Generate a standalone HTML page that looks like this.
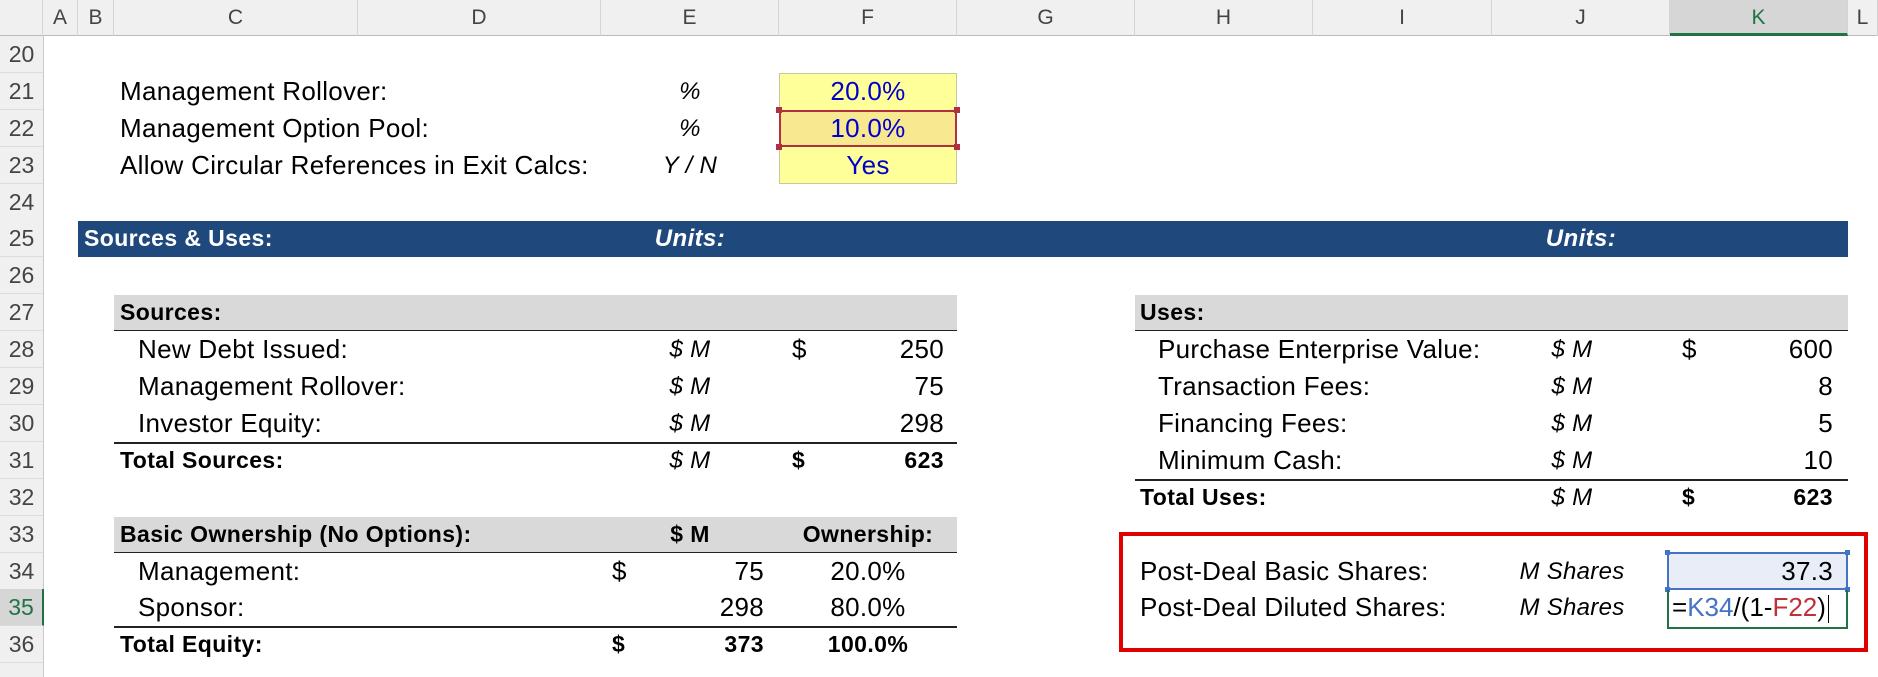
<!DOCTYPE html>
<html><head><meta charset="utf-8"><style>
*{margin:0;padding:0;box-sizing:border-box}
body{width:1878px;height:677px;background:#fff;position:relative;overflow:hidden;font-family:"Liberation Sans",sans-serif;font-size:26px;color:#000;letter-spacing:0.3px}
.a{position:absolute;line-height:37px;height:37px;white-space:nowrap}
.b{font-weight:bold;font-size:23px;letter-spacing:0.4px}.i{font-style:italic;font-size:24px}
.r{text-align:right}.c{text-align:center}
.bx{position:absolute}
.ch{position:absolute;top:0;height:36px;line-height:36px;text-align:center;color:#444;font-size:21px;border-right:1px solid #d4d4d4;letter-spacing:0}
.rh{position:absolute;left:0;width:43px;height:37px;text-align:center;color:#444;font-size:23px;line-height:37px;border-bottom:1px solid #dcdcdc;background:#f0f0f0;letter-spacing:0}
.blue{color:#0000cc}
</style></head><body>
<div class="bx" style="left:0;top:0;width:1878px;height:36px;background:#f0f0f0;border-bottom:1px solid #bbb"></div>
<div class="ch" style="left:0;width:43px"></div>
<div class="ch" style="left:43px;width:35px">A</div>
<div class="ch" style="left:78px;width:36px">B</div>
<div class="ch" style="left:114px;width:244px">C</div>
<div class="ch" style="left:358px;width:243px">D</div>
<div class="ch" style="left:601px;width:178px">E</div>
<div class="ch" style="left:779px;width:178px">F</div>
<div class="ch" style="left:957px;width:178px">G</div>
<div class="ch" style="left:1135px;width:178px">H</div>
<div class="ch" style="left:1313px;width:179px">I</div>
<div class="ch" style="left:1492px;width:178px">J</div>
<div class="ch" style="left:1670px;width:178px;background:#d6d6d6;color:#217346;border-bottom:3px solid #217346">K</div>
<div class="ch" style="left:1848px;width:30px">L</div>
<div class="bx" style="left:0;top:36px;width:44px;height:641px;background:#f0f0f0;border-right:1px solid #c8c8c8"></div>
<div class="rh" style="top:36px">20</div>
<div class="rh" style="top:73px">21</div>
<div class="rh" style="top:110px">22</div>
<div class="rh" style="top:147px">23</div>
<div class="rh" style="top:184px">24</div>
<div class="rh" style="top:220px">25</div>
<div class="rh" style="top:257px">26</div>
<div class="rh" style="top:294px">27</div>
<div class="rh" style="top:331px">28</div>
<div class="rh" style="top:368px">29</div>
<div class="rh" style="top:405px">30</div>
<div class="rh" style="top:442px">31</div>
<div class="rh" style="top:479px">32</div>
<div class="rh" style="top:516px">33</div>
<div class="rh" style="top:553px">34</div>
<div class="rh" style="top:589px;color:#217346;background:#d6d6d6;width:44px;border-right:2px solid #217346">35</div>
<div class="rh" style="top:626px">36</div>

<div class="a" style="left:120px;top:73px">Management Rollover:</div>
<div class="a" style="left:120px;top:110px">Management Option Pool:</div>
<div class="a" style="left:120px;top:147px">Allow Circular References in Exit Calcs:</div>
<div class="a i c" style="left:601px;width:178px;top:73px">%</div>
<div class="a i c" style="left:601px;width:178px;top:110px">%</div>
<div class="a i c" style="left:601px;width:178px;top:147px">Y / N</div>
<div class="bx" style="left:779px;top:73px;width:178px;height:111px;background:#ffff99;border:1px solid #c8c8a0"></div>
<div class="bx" style="left:779px;top:110px;width:178px;height:37px;background:#f8e890;border:2px solid #b03040"></div>
<div class="bx" style="left:776px;top:107px;width:6px;height:6px;background:#b03040"></div>
<div class="bx" style="left:954px;top:107px;width:6px;height:6px;background:#b03040"></div>
<div class="bx" style="left:776px;top:144px;width:6px;height:6px;background:#b03040"></div>
<div class="bx" style="left:954px;top:144px;width:6px;height:6px;background:#b03040"></div>
<div class="a c blue" style="left:779px;width:178px;top:73px">20.0%</div>
<div class="a c blue" style="left:779px;width:178px;top:110px">10.0%</div>
<div class="a c blue" style="left:779px;width:178px;top:147px">Yes</div>

<div class="bx" style="left:78px;top:221px;width:1770px;height:36px;background:#1f497d"></div>
<div class="a b" style="left:84px;top:220px;color:#fff">Sources &amp; Uses:</div>
<div class="a b i c" style="left:601px;width:178px;top:220px;color:#fff">Units:</div>
<div class="a b i c" style="left:1492px;width:178px;top:220px;color:#fff">Units:</div>

<div class="bx" style="left:114px;top:295px;width:843px;height:36px;background:#d9d9d9;border-bottom:1.5px solid #222"></div>
<div class="a b" style="left:120px;top:294px">Sources:</div>
<div class="a" style="left:138px;top:331px">New Debt Issued:</div>
<div class="a" style="left:138px;top:368px">Management Rollover:</div>
<div class="a" style="left:138px;top:405px">Investor Equity:</div>
<div class="bx" style="left:114px;top:442px;width:843px;height:1.5px;background:#222"></div>
<div class="a b" style="left:120px;top:442px">Total Sources:</div>
<div class="a i c" style="left:601px;width:178px;top:331px">$ M</div>
<div class="a i c" style="left:601px;width:178px;top:368px">$ M</div>
<div class="a i c" style="left:601px;width:178px;top:405px">$ M</div>
<div class="a i c" style="left:601px;width:178px;top:442px">$ M</div>
<div class="a" style="left:792px;top:331px">$</div>
<div class="a b" style="left:792px;top:442px">$</div>
<div class="a r" style="left:800px;width:144px;top:331px">250</div>
<div class="a r" style="left:800px;width:144px;top:368px">75</div>
<div class="a r" style="left:800px;width:144px;top:405px">298</div>
<div class="a r b" style="left:800px;width:144px;top:442px">623</div>

<div class="bx" style="left:114px;top:517px;width:843px;height:36px;background:#d9d9d9;border-bottom:1.5px solid #222"></div>
<div class="a b" style="left:120px;top:516px">Basic Ownership (No Options):</div>
<div class="a b c" style="left:601px;width:178px;top:516px">$ M</div>
<div class="a b c" style="left:779px;width:178px;top:516px">Ownership:</div>
<div class="a" style="left:138px;top:553px">Management:</div>
<div class="a" style="left:138px;top:589px">Sponsor:</div>
<div class="bx" style="left:114px;top:626px;width:843px;height:1.5px;background:#222"></div>
<div class="a b" style="left:120px;top:626px">Total Equity:</div>
<div class="a" style="left:612px;top:553px">$</div>
<div class="a b" style="left:612px;top:626px">$</div>
<div class="a r" style="left:620px;width:144px;top:553px">75</div>
<div class="a r" style="left:620px;width:144px;top:589px">298</div>
<div class="a r b" style="left:620px;width:144px;top:626px">373</div>
<div class="a c" style="left:779px;width:178px;top:553px">20.0%</div>
<div class="a c" style="left:779px;width:178px;top:589px">80.0%</div>
<div class="a c b" style="left:779px;width:178px;top:626px">100.0%</div>

<div class="bx" style="left:1135px;top:295px;width:713px;height:36px;background:#d9d9d9;border-bottom:1.5px solid #222"></div>
<div class="a b" style="left:1140px;top:294px">Uses:</div>
<div class="a" style="left:1158px;top:331px">Purchase Enterprise Value:</div>
<div class="a" style="left:1158px;top:368px">Transaction Fees:</div>
<div class="a" style="left:1158px;top:405px">Financing Fees:</div>
<div class="a" style="left:1158px;top:442px">Minimum Cash:</div>
<div class="bx" style="left:1135px;top:479px;width:713px;height:1.5px;background:#222"></div>
<div class="a b" style="left:1140px;top:479px">Total Uses:</div>
<div class="a i c" style="left:1492px;width:160px;top:331px">$ M</div>
<div class="a i c" style="left:1492px;width:160px;top:368px">$ M</div>
<div class="a i c" style="left:1492px;width:160px;top:405px">$ M</div>
<div class="a i c" style="left:1492px;width:160px;top:442px">$ M</div>
<div class="a i c" style="left:1492px;width:160px;top:479px">$ M</div>
<div class="a" style="left:1682px;top:331px">$</div>
<div class="a b" style="left:1682px;top:479px">$</div>
<div class="a r" style="left:1690px;width:143px;top:331px">600</div>
<div class="a r" style="left:1690px;width:143px;top:368px">8</div>
<div class="a r" style="left:1690px;width:143px;top:405px">5</div>
<div class="a r" style="left:1690px;width:143px;top:442px">10</div>
<div class="a r b" style="left:1690px;width:143px;top:479px">623</div>

<div class="a" style="left:1140px;top:553px">Post-Deal Basic Shares:</div>
<div class="a" style="left:1140px;top:589px">Post-Deal Diluted Shares:</div>
<div class="a i c" style="left:1492px;width:160px;top:553px">M Shares</div>
<div class="a i c" style="left:1492px;width:160px;top:589px">M Shares</div>
<div class="bx" style="left:1667px;top:552px;width:181px;height:38px;background:#e8edf7;border:2px solid #4472c4"></div>
<div class="bx" style="left:1665px;top:550px;width:5px;height:5px;background:#4472c4"></div>
<div class="bx" style="left:1845px;top:550px;width:5px;height:5px;background:#4472c4"></div>
<div class="bx" style="left:1665px;top:587px;width:5px;height:5px;background:#4472c4"></div>
<div class="bx" style="left:1845px;top:587px;width:5px;height:5px;background:#4472c4"></div>
<div class="a r" style="left:1690px;width:143px;top:553px">37.3</div>
<div class="bx" style="left:1667px;top:590px;width:181px;height:39px;border:2px solid #217346;border-top:none"></div>
<div class="a" style="left:1672px;top:589px;letter-spacing:0">=<span style="color:#4472c4">K34</span>/(1-<span style="color:#c0303a">F22</span>)<span style="display:inline-block;width:1.5px;height:28px;background:#000;vertical-align:middle;margin-left:2px"></span></div>
<div class="bx" style="left:1119px;top:532px;width:749px;height:120px;border:4px solid #e00000"></div>
</body></html>
